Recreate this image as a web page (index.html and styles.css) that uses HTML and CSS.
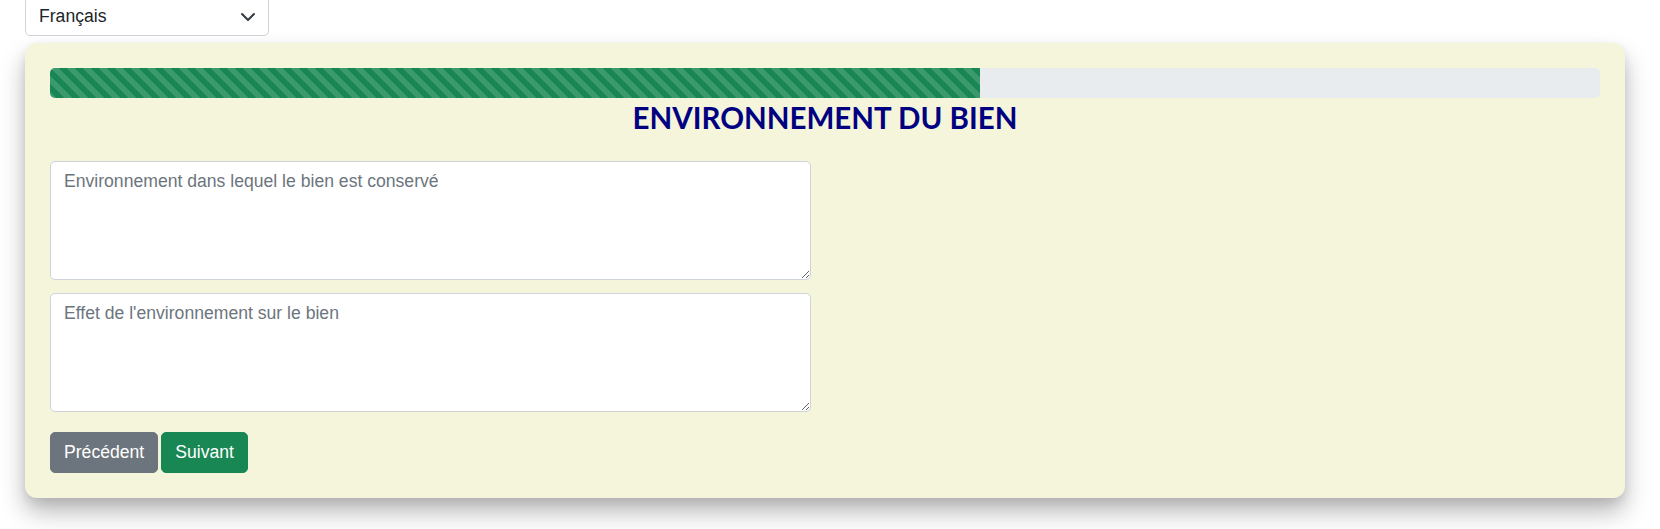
FILE: index.html
```html
<!DOCTYPE html>
<html lang="fr">
<head>
<meta charset="utf-8">
<title>Environnement du bien</title>
<link rel="stylesheet" href="styles.css">
</head>
<body>
<div class="page">
  <div class="lang-select">
    <span class="lang-label">Français</span>
    <svg class="chevron" width="16" height="16" viewBox="0 0 16 16" aria-hidden="true"><path d="M2 5l6 6 6-6" fill="none" stroke="#343a40" stroke-width="2" stroke-linecap="round" stroke-linejoin="round"/></svg>
  </div>
  <div class="card">
    <div class="progress"><div class="progress-bar" style="width:60%"></div></div>
    <h3 class="title">ENVIRONNEMENT DU BIEN</h3>
    <div class="fields">
      <textarea class="field" placeholder="Environnement dans lequel le bien est conservé"></textarea>
      <textarea class="field" placeholder="Effet de l'environnement sur le bien"></textarea>
    </div>
    <div class="actions">
      <button class="btn btn-prev">Précédent</button>
      <button class="btn btn-next">Suivant</button>
    </div>
  </div>
</div>
</body>
</html>
```
FILE: styles.css
```css
html, body {
  margin: 0;
  padding: 0;
  background: #ffffff;
  font-family: "Liberation Sans", Arial, sans-serif;
  color: #212529;
}
.page {
  padding: 0 25px 40px;
  margin-top: -4px;
}
.lang-select {
  box-sizing: border-box;
  width: 244px;
  height: 40px;
  border: 1px solid #ced4da;
  border-radius: 5px;
  background: #fff;
  display: flex;
  align-items: center;
  justify-content: space-between;
  padding: 0 12px 0 13px;
  font-size: 17.6px;
}
.chevron {
  display: block;
  margin-top: 1px;
}
.card {
  box-sizing: border-box;
  width: 1600px;
  margin-top: 7px;
  background: #f5f5dc;
  border-radius: 12px;
  padding: 25px;
  box-shadow: 0 14px 24px rgba(0, 0, 0, 0.28), 0 4px 10px rgba(0, 0, 0, 0.08);
}
.progress {
  height: 30px;
  background: #e9ecef;
  border-radius: 5px;
  overflow: hidden;
  display: flex;
}
.progress-bar {
  height: 100%;
  background-color: #198754;
  background-image: linear-gradient(45deg, rgba(255,255,255,.15) 25%, transparent 25%, transparent 50%, rgba(255,255,255,.15) 50%, rgba(255,255,255,.15) 75%, transparent 75%, transparent);
  background-size: 16px 16px;
}
.title {
  margin: 2px 0 26px;
  text-align: center;
  font-family: Lato, "Liberation Sans", sans-serif;
  font-weight: 700;
  font-size: 29.5px;
  line-height: 1.2;
  color: #000080;
}
.fields {
  display: flex;
  flex-direction: column;
  gap: 13px;
}
.field {
  box-sizing: border-box;
  display: block;
  width: 761px;
  height: 119px;
  margin: 0;
  padding: 6px 13px;
  border: 1px solid #ced4da;
  border-radius: 5px;
  background: #fff;
  font-family: "Liberation Sans", Arial, sans-serif;
  font-size: 17.6px;
  line-height: 1.5;
  color: #212529;
  resize: vertical;
}
.field::placeholder {
  color: #6c757d;
  opacity: 1;
}
.actions {
  display: flex;
  gap: 3px;
  margin-top: 20px;
}
.btn {
  font-family: "Liberation Sans", Arial, sans-serif;
  font-size: 17.6px;
  line-height: 1.5;
  padding: 6px 13px;
  border: 1px solid transparent;
  border-radius: 5px;
  color: #fff;
  cursor: pointer;
}
.btn-prev {
  background: #6c757d;
  border-color: #6c757d;
}
.btn-next {
  background: #198754;
  border-color: #198754;
}
```
